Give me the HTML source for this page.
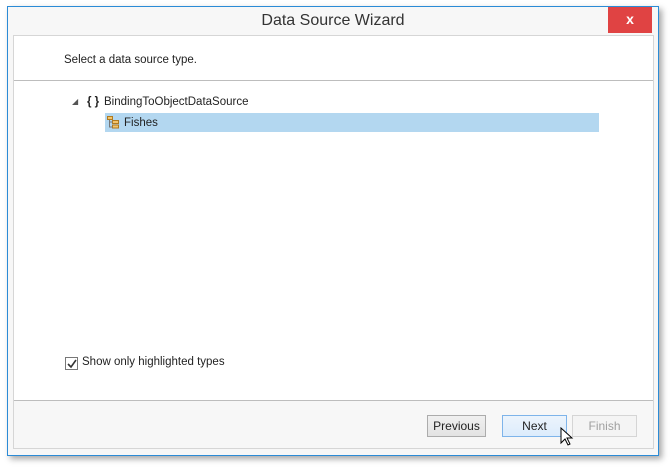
<!DOCTYPE html>
<html><head><style>
body{margin:0;width:670px;height:470px;background:#fff;font-family:"Liberation Sans",sans-serif;position:relative;overflow:hidden}
.win{position:absolute;left:7px;top:6px;width:650px;height:448px;border:1px solid #2b8bd6;background:#f7f7f7;box-shadow:3px 3px 6px rgba(0,0,0,.35)}
.title{position:absolute;left:0;right:0;top:5px;text-align:center;font-size:16px;color:#333}
.close{position:absolute;left:600px;top:0;width:44px;height:26px;background:#e04343;color:#fff;font-size:14px;font-weight:bold;text-align:center;line-height:24px}
.content{position:absolute;left:5px;top:28px;width:639px;height:412px;border:1px solid #d6d6d6;background:#fff}
.hdr{position:absolute;left:0;right:0;top:0;height:44px;border-bottom:1px solid #bdbdbd}
.t{position:absolute;font-size:11.5px;color:#222;white-space:nowrap}
.foot{position:absolute;left:0;right:0;top:364px;bottom:0;border-top:1px solid #bdbdbd;background:#f7f7f7}
.btn{position:absolute;top:14px;height:20px;border:1px solid #acacac;background:linear-gradient(#f0f0f0,#e3e3e3);font-size:12px;text-align:center;line-height:20px;color:#222}
</style></head><body>
<div class="win">
<div class="title">Data Source Wizard</div>
<div class="close">x</div>
<div class="content">
<div class="hdr"><div class="t" style="left:50px;top:18px">Select a data source type.</div></div>
<div class="t" style="left:58px;top:61px;font-size:8px;color:#555">◢</div>
<div class="t" style="left:73px;top:60px;font-weight:bold">{ }</div>
<div class="t" style="left:90px;top:60px">BindingToObjectDataSource</div>
<div style="position:absolute;left:91px;top:77px;width:494px;height:19px;background:#b3d7f0"></div>
<svg style="position:absolute;left:93px;top:80px" width="12" height="13"><rect x="0.5" y="0.5" width="5" height="3" fill="#f3c46a" stroke="#b07a20"/><rect x="5.5" y="4.5" width="6" height="3" fill="#f3c46a" stroke="#b07a20"/><rect x="5.5" y="9" width="6" height="3" fill="#f3c46a" stroke="#b07a20"/><path d="M2.5 4v7h3M2.5 6h3" stroke="#777" fill="none"/></svg>
<div class="t" style="left:110px;top:81px">Fishes</div>
<div style="position:absolute;left:51px;top:321px;width:11px;height:11px;border:1px solid #777;background:#fff"></div>
<svg style="position:absolute;left:52px;top:322px" width="12" height="12"><path d="M2 6l3 3 5-7" stroke="#333" stroke-width="1.6" fill="none"/></svg>
<div class="t" style="left:68px;top:320px">Show only highlighted types</div>
<div class="foot">
<div class="btn" style="left:413px;width:57px">Previous</div>
<div class="btn" style="left:488px;width:63px;border-color:#7eb4ea;background:linear-gradient(#ecf4fc,#dcecfc)">Next</div>
<div class="btn" style="left:558px;width:63px;border-color:#d5d5d5;background:#f4f4f4;color:#a0a0a0">Finish</div>
<svg style="position:absolute;left:546px;top:26px" width="14" height="20"><path d="M1 1v15l4-4 3 6 2-1-3-6h5z" fill="#fff" stroke="#000"/></svg>
</div>
</div>
</div>
</body></html>
